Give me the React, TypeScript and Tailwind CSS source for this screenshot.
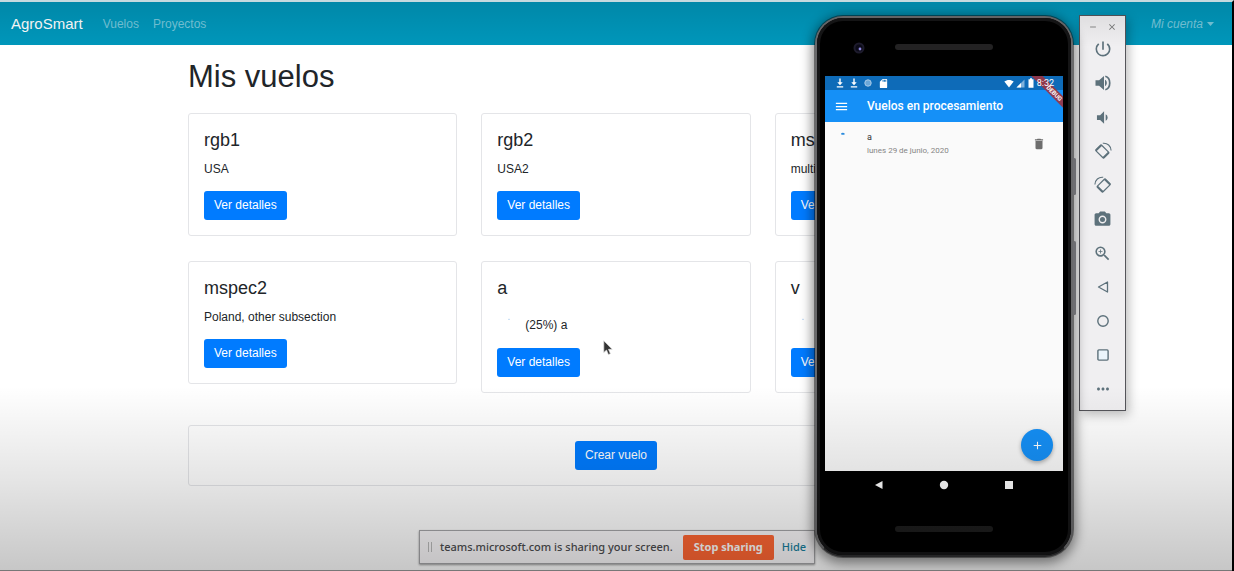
import React from "react";
import type { ReactNode } from "react";
import {
  MdCameraAlt,
  MdClose,
  MdDelete,
  MdMenu,
  MdAdd,
  MdMoreHoriz,
  MdPowerSettingsNew,
  MdRemove,
  MdSdCard,
  MdVolumeDown,
  MdVolumeUp,
  MdZoomIn,
} from "react-icons/md";

type Flight = { name: string; note: string; progress?: boolean };

const flights: Flight[] = [
  { name: "rgb1", note: "USA" },
  { name: "rgb2", note: "USA2" },
  { name: "mspec1", note: "multispectral" },
  { name: "mspec2", note: "Poland, other subsection" },
  { name: "a", note: "(25%) a", progress: true },
  { name: "v", note: "(0%) v", progress: true },
];

function FlightCard({ name, note, progress }: Flight) {
  return (
    <article className="rounded-[3px] border border-[#e4e5e8] bg-white p-[15px]">
      <h2 className="mb-[9px] text-[18px] leading-[22px]">{name}</h2>
      {progress ? (
        <p className="mb-[6px] flex h-[34px] items-center gap-1">
          <svg className="size-6" viewBox="0 0 24 24" fill="none" aria-hidden="true">
            <path d="M11 6.500q1-.6 2 0" stroke="#c3dcf5" strokeWidth="1" />
          </svg>
          {note}
        </p>
      ) : (
        <p className="mb-[13px]">{note}</p>
      )}
      <button className="block rounded-[3px] bg-[#007bff] px-[10px] py-[5px] leading-[19px] text-white">
        Ver detalles
      </button>
    </article>
  );
}

function RotateIcon({ flip = false }: { flip?: boolean }) {
  return (
    <svg className={flip ? "size-[18px] -scale-x-100" : "size-[18px]"} viewBox="0 0 18 18" fill="none" stroke="currentColor">
      <g transform="rotate(-45 8.300 9.500)">
        <rect x="4.300" y="3.800" width="8" height="11.400" rx=".8" strokeWidth="1.200" />
        <path d="M4.300 4.400h8M4.300 14.600h8" strokeWidth="1.800" />
      </g>
      <path d="M8.800 1.300C13.500 .8 16.900 4 17.100 8.500" strokeWidth="1.100" />
    </svg>
  );
}

const tools: { label: string; icon: ReactNode }[] = [
  { label: "Power", icon: <MdPowerSettingsNew size={20} /> },
  {
    label: "Volume up",
    icon: (
      <svg className="size-[18px]" viewBox="0 0 18 18">
        <path d="M1.500 6.300h3.600L10 2v14l-4.900-4.300H1.500z" fill="currentColor" />
        <path d="M11 5.800c2.400 1.200 2.400 5.200 0 6.400z" fill="currentColor" />
        <path d="M11.300 2.300c5.900 1.500 5.900 11.900 0 13.400" fill="none" stroke="currentColor" strokeWidth="1.700" />
      </svg>
    ),
  },
  { label: "Volume down", icon: <MdVolumeDown size={19} /> },
  { label: "Rotate left", icon: <RotateIcon /> },
  { label: "Rotate right", icon: <RotateIcon flip /> },
  { label: "Screenshot", icon: <MdCameraAlt size={19} /> },
  { label: "Zoom", icon: <MdZoomIn size={19} /> },
  {
    label: "Back",
    icon: (
      <svg className="size-4" viewBox="0 0 16 16" fill="none" stroke="currentColor" strokeWidth="1.300" strokeLinejoin="round">
        <path d="M12.500 3v10L3.500 8z" />
      </svg>
    ),
  },
  {
    label: "Home",
    icon: (
      <svg className="size-4" viewBox="0 0 16 16" fill="none" stroke="currentColor" strokeWidth="1.400">
        <circle cx="8" cy="8" r="5.200" />
      </svg>
    ),
  },
  {
    label: "Overview",
    icon: (
      <svg className="size-4" viewBox="0 0 16 16" fill="#eaf4fb" stroke="currentColor" strokeWidth="1.400">
        <rect x="2.900" y="2.900" width="10.200" height="10.200" rx="1" />
      </svg>
    ),
  },
  { label: "More", icon: <MdMoreHoriz size={18} /> },
];

function Toolbar() {
  return (
    <aside className="flex w-[47px] flex-col self-start border border-[#55555a] bg-[#f0eff1] pb-1 text-[#5d717b] shadow-[3px_4px_10px_rgba(0,0,0,0.25)]">
      <div className="flex h-4 items-end justify-center gap-[9px] text-[#777]">
        <button aria-label="Minimize"><MdRemove size={10} /></button>
        <button aria-label="Close"><MdClose size={10} /></button>
      </div>
      {tools.map((t) => (
        <button key={t.label} aria-label={t.label} className="flex h-[34px] items-center justify-center">
          {t.icon}
        </button>
      ))}
    </aside>
  );
}

function DownloadIcon() {
  return (
    <svg className="h-[10px] w-2" viewBox="0 0 8 10" fill="currentColor">
      <path d="M3.300 .5h1.400v3.800h2L4 7.200 1.300 4.300h2zM.8 8.300h6.400v1.200H.8z" />
    </svg>
  );
}

function Phone() {
  return (
    <section
      aria-label="Vuelos en procesamiento"
      className="relative flex w-[258px] flex-col rounded-[28px] border-2 border-[#6a6a6c] border-b-[#2e2e30] bg-black px-2 shadow-[0_3px_12px_3px_rgba(0,0,0,0.45)] ring-1 ring-black/40 [font-family:Roboto,sans-serif]"
    >
      <div className="pointer-events-none absolute inset-0 rounded-[26px] border-[3px] border-[#151516]" />
      <div className="absolute -right-[5px] top-[140px] h-[37px] w-[3px] rounded-full bg-[#6e6e72]" />
      <div className="absolute -right-[5px] top-[223px] h-[74px] w-[3px] rounded-full bg-[#6e6e72]" />
      <div className="relative flex h-[58px] items-center justify-center">
        <svg className="absolute left-[28px] top-[24px] size-3" viewBox="0 0 12 12">
          <circle cx="6" cy="6" r="5.500" fill="#1d1b2c" />
          <circle cx="6" cy="6" r="3.500" fill="#0b0a18" />
          <circle cx="7" cy="7" r="1.400" fill="#8d86dc" />
        </svg>
        <div className="h-[6px] w-[98px] rounded-sm bg-[#232223]" />
      </div>

      <div className="relative flex h-[395px] flex-col overflow-hidden bg-[#fafafa]">
        <div className="flex h-[14px] shrink-0 items-center bg-[#0e6bb8] pl-[11px] pr-[9px] text-white">
          <div className="flex flex-1 items-center gap-[6px]">
            <DownloadIcon />
            <DownloadIcon />
            <svg className="size-2" viewBox="0 0 8 8">
              <circle cx="4" cy="4" r="3.200" fill="#6ba7d8" stroke="#a9cbe8" />
            </svg>
            <MdSdCard size={11} />
          </div>
          <div className="flex items-center gap-[2px]">
            <svg className="h-[9px] w-[10px]" viewBox="0 0 10 9" fill="currentColor">
              <path d="M.3 2.600C3 .3 7 .3 9.700 2.600L5 8.500z" />
            </svg>
            <svg className="h-[9px] w-[9px]" viewBox="0 0 9 9">
              <path d="M8.500 .5v8h-8z" fill="#7fb2dc" />
              <path d="M5 4v4.500H.5z" fill="#fff" />
            </svg>
            <svg className="h-[10px] w-[8px]" viewBox="0 0 8 10" fill="currentColor">
              <path d="M3 .2h2v1.100h1.500v8.500h-5V1.300H3z" />
            </svg>
            <span className="relative z-10 text-[9px] leading-[14px]">8:32</span>
          </div>
        </div>
        <header className="flex h-8 shrink-0 items-center bg-[#1590f7] pl-[9px] text-white">
          <button aria-label="Menu" className="w-[33px]"><MdMenu size={15} /></button>
          <h2 className="text-[12px] font-medium">Vuelos en procesamiento</h2>
        </header>
        <div className="flex items-center pl-[16px] pr-[17px] pt-[9px]">
          <svg className="mb-[22px] h-[3px] w-[26px]" viewBox="0 0 26 3">
            <path d="M0 1.500q2-1.500 4 .5l-1 .8H.5z" fill="#2b8bdd" />
          </svg>
          <div className="flex-1 leading-[13px]">
            <p className="text-[9px] text-[#333]">a</p>
            <p className="text-[8px] text-[#858585]">lunes 29 de junio, 2020</p>
          </div>
          <button aria-label="Eliminar"><MdDelete size={14} className="text-[#6d6d6d]" /></button>
        </div>
        <button
          aria-label="Agregar"
          className="absolute bottom-[10px] right-[10px] flex size-8 items-center justify-center rounded-full bg-[#1590f7] text-white shadow-[0_2px_4px_rgba(0,0,0,0.3)]"
        >
          <MdAdd size={13} />
        </button>
        <div className="absolute -right-[27px] top-[9px] w-20 rotate-45 bg-[#9c3340]/90 pl-3 text-center text-[6px] font-bold leading-[8px] text-white">
          DEBUG
        </div>
      </div>

      <nav className="flex h-7 items-center justify-center gap-[55px] text-white">
        <button aria-label="Atrás">
          <svg className="size-[10px]" viewBox="0 0 10 10" fill="currentColor"><path d="M8.500 1v8L1 5z" /></svg>
        </button>
        <button aria-label="Inicio">
          <svg className="size-[10px]" viewBox="0 0 10 10" fill="currentColor"><circle cx="5" cy="5" r="4.200" /></svg>
        </button>
        <button aria-label="Recientes">
          <svg className="size-[10px]" viewBox="0 0 10 10" fill="currentColor"><path d="M1 1h8v8H1z" /></svg>
        </button>
      </nav>
      <div className="flex h-[56px] items-center justify-center pt-1">
        <div className="h-[6px] w-[98px] rounded-sm bg-[#1d1d1d]" />
      </div>
    </section>
  );
}

function SharingBar() {
  return (
    <div className="absolute bottom-[7px] left-1/2 -ml-[197px] flex h-[34px] items-center whitespace-nowrap border border-[#a5a5a8] bg-[#faf8fa] pl-2 pr-2 text-[11px] text-[#4c4c4f] shadow-[0_1px_2px_rgba(0,0,0,0.4)] [font-family:'Noto_Sans','Open_Sans',sans-serif]">
      <span className="mr-2 h-[10px] w-1 border-x border-[#bbb]" />
      <span className="mr-[10px] font-medium">teams.microsoft.com is sharing your screen.</span>
      <button className="mr-2 h-[25px] rounded-[2px] bg-[#ff6633] px-[11px] font-bold text-white">Stop sharing</button>
      <a href="#hide" className="font-medium text-[#187f9d]">Hide</a>
    </div>
  );
}

export default function App() {
  return (
    <div className="relative min-h-screen overflow-hidden border-r-2 border-t-2 border-r-black border-t-[#c5dadf] bg-white text-[12px] leading-[18px] text-[#212529] [font-family:'Liberation_Sans',Arial,sans-serif]">
      <nav className="flex h-[43px] items-center bg-[#0097bb] px-[11px] text-[#75c6da]">
        <a href="#inicio" className="mr-5 text-[15px] text-white">AgroSmart</a>
        <a href="#vuelos" className="mr-[14px]">Vuelos</a>
        <a href="#proyectos">Proyectos</a>
        <button className="ml-auto mr-[7px] flex items-center gap-1 italic">
          Mi cuenta
          <svg className="h-1 w-[7px]" viewBox="0 0 7 4" fill="currentColor"><path d="M0 0h7L3.500 4z" /></svg>
        </button>
      </nav>

      <main className="mx-auto max-w-[880px] px-3 pt-[13px]">
        <h1 className="mb-[17px] text-[31px] leading-[38px]">Mis vuelos</h1>
        <div className="grid grid-cols-3 items-start gap-x-6 gap-y-[25px]">
          {flights.map((f) => (
            <FlightCard key={f.name} {...f} />
          ))}
        </div>
        <div className="mt-8 flex justify-center rounded-[3px] border border-[#e4e5e8] p-[15px]">
          <button className="rounded-[3px] bg-[#007bff] px-[10px] py-[5px] leading-[19px] text-white">Crear vuelo</button>
        </div>
      </main>

      <svg className="absolute left-1/2 top-[338px] -ml-[13px] h-4 w-[10px]" viewBox="0 0 10 16">
        <path d="M.8 .8v11.700l2.700-2.500 1.900 4.500 2-.8-1.900-4.400h3.700z" fill="#333" stroke="#ddd" strokeWidth=".7" />
      </svg>

      <SharingBar />

      <div className="absolute right-[106px] top-[13px] flex items-start gap-[6px]">
        <div className="pt-[1px]">
          <Phone />
        </div>
        <Toolbar />
      </div>

      <div className="pointer-events-none absolute inset-x-0 top-0 h-[45px] bg-linear-to-b from-black/10 to-transparent" />
      <div className="pointer-events-none absolute inset-x-0 bottom-0 h-[185px] border-b border-[#777] bg-linear-to-b from-transparent via-black/10 to-black/22" />
    </div>
  );
}
